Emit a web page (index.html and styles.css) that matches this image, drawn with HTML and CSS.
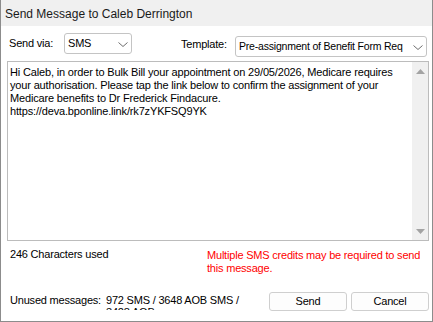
FILE: index.html
```html
<!DOCTYPE html>
<html>
<head>
<meta charset="utf-8">
<link rel="stylesheet" href="styles.css">
</head>
<body>
<div class="window">
  <div class="titlebar">Send Message to Caleb Derrington</div>
  <div class="toolbar">
    <span class="label label-via">Send via:</span>
    <div class="combo combo-via">
      <span class="combo-text">SMS</span>
      <svg class="chev" viewBox="0 0 10 5" width="10" height="5"><polyline points="0.5,0.5 5,4.5 9.5,0.5" fill="none" stroke="#6e6e6e" stroke-width="1"/></svg>
    </div>
    <span class="label label-template">Template:</span>
    <div class="combo combo-template">
      <span class="combo-text">Pre-assignment of Benefit Form Req</span>
      <svg class="chev" viewBox="0 0 10 5" width="10" height="5"><polyline points="0.5,0.5 5,4.5 9.5,0.5" fill="none" stroke="#6e6e6e" stroke-width="1"/></svg>
    </div>
  </div>
  <div class="message">
    <div class="message-text">Hi Caleb, in order to Bulk Bill your appointment on 29/05/2026, Medicare requires your authorisation. Please tap the link below to confirm the assignment of your Medicare benefits to Dr Frederick Findacure.<br>https://deva.bponline.link/rk7zYKFSQ9YK</div>
    <div class="scrollbar">
      <svg class="arrow" viewBox="0 0 9 5" width="9" height="5"><polygon points="0,5 4.5,0 9,5" fill="#a3a3a3"/></svg>
      <svg class="arrow" viewBox="0 0 9 5" width="9" height="5"><polygon points="0,0 4.5,5 9,0" fill="#a3a3a3"/></svg>
    </div>
  </div>
  <div class="info">
    <div class="count">246 Characters used</div>
    <div class="warning">Multiple SMS credits may be required to send this message.</div>
  </div>
  <div class="footer">
    <span class="unused-label">Unused messages:</span>
    <div class="unused-value">972 SMS / 3648 AOB SMS / 3428 AOB</div>
    <div class="buttons">
      <button class="btn">Send</button>
      <button class="btn">Cancel</button>
    </div>
  </div>
</div>
</body>
</html>
```
FILE: styles.css
```css
html, body {
  margin: 0;
  padding: 0;
  background: #ffffff;
}

body {
  font-family: "Liberation Sans", Arial, sans-serif;
  font-size: 11px;
  letter-spacing: -0.2px;
  color: #000000;
}

.window {
  width: 433px;
  height: 322px;
  box-sizing: border-box;
  border: 1px solid #8c8c8c;
  border-top: none;
  display: flex;
  flex-direction: column;
  background: #ffffff;
  overflow: hidden;
}

.titlebar {
  flex: none;
  height: 26px;
  box-sizing: border-box;
  padding: 2px 0 0 4px;
  line-height: 24px;
  font-size: 12px;
  letter-spacing: 0;
  background: #f0f0f0;
  color: #1a1a1a;
  white-space: nowrap;
}

.toolbar {
  flex: none;
  height: 35px;
  box-sizing: border-box;
  display: flex;
  align-items: flex-start;
  padding: 7px 0 0 8px;
  line-height: 13px;
}

.label {
  white-space: nowrap;
}

.label-via {
  width: 55px;
  margin-top: 4px;
}

.label-template {
  width: 54px;
  margin-left: 49px;
  margin-top: 5px;
}

.combo {
  box-sizing: border-box;
  height: 21px;
  border: 1px solid #c4c4c4;
  border-radius: 3px;
  display: flex;
  align-items: center;
  justify-content: space-between;
  padding: 0 3px 0 3px;
  background: #ffffff;
  white-space: nowrap;
}

.combo-via {
  width: 68px;
}

.combo-template {
  width: 192px;
  margin-top: 3px;
  font-size: 10.5px;
}

.chev {
  flex: none;
  margin-top: 2px;
}

.message {
  flex: none;
  height: 180px;
  box-sizing: border-box;
  margin: 0 3px 0 6px;
  border: 1px solid #bcbcbc;
  display: flex;
}

.message-text {
  flex: 1;
  padding: 4px 0 0 2px;
  line-height: 13px;
  letter-spacing: -0.16px;
}

.scrollbar {
  flex: none;
  width: 16px;
  box-sizing: border-box;
  background: #f0f0f0;
  display: flex;
  flex-direction: column;
  justify-content: space-between;
  align-items: center;
  padding: 7px 0 6px 0;
}

.arrow {
  display: block;
}

.info {
  flex: none;
  height: 51px;
  box-sizing: border-box;
  display: flex;
  align-items: flex-start;
  padding-left: 9px;
  line-height: 13px;
}

.count {
  width: 197px;
  margin-top: 7px;
}

.warning {
  flex: 1;
  margin-top: 8px;
  padding-right: 4px;
  color: #ff0000;
}

.footer {
  flex: 1;
  display: flex;
  align-items: flex-start;
  padding: 0 3px 0 9px;
  line-height: 13px;
}

.unused-label {
  width: 96px;
  margin-top: 2px;
  white-space: nowrap;
}

.unused-value {
  width: 150px;
  height: 16px;
  overflow: hidden;
  line-height: 12px;
  margin-top: 2px;
}

.buttons {
  margin-left: auto;
  display: flex;
  gap: 4px;
}

.btn {
  width: 78px;
  height: 19px;
  box-sizing: border-box;
  border: 1px solid #cfcfcf;
  border-radius: 3px;
  background: #fdfdfd;
  padding: 0;
  margin: 0;
  font: inherit;
  letter-spacing: inherit;
  line-height: 17px;
  color: #000000;
}
```
